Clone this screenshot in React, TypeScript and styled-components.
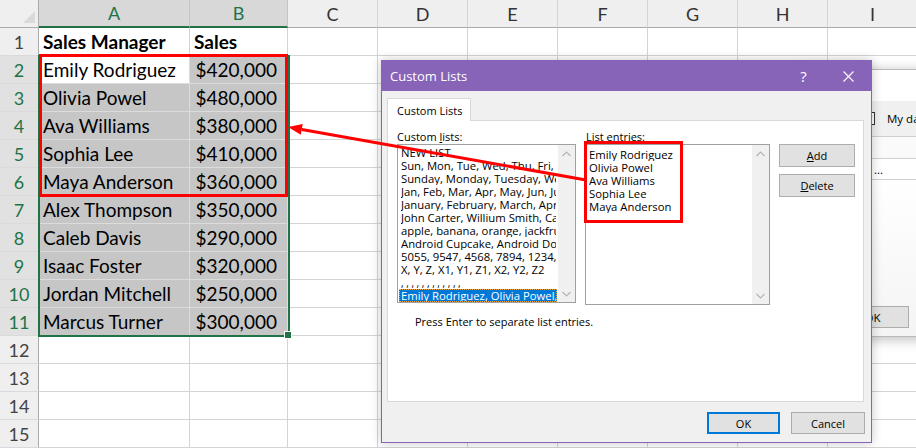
import React from "react";
import styled, { createGlobalStyle } from "styled-components";

const GlobalStyle = createGlobalStyle`
  html, body { margin: 0; padding: 0; background: #fff; overflow: hidden; }
  * { box-sizing: border-box; }
`;

const Page = styled.div`
  position: relative;
  width: 916px;
  height: 448px;
  overflow: hidden;
  background: #fff;
`;

/* ---------- Spreadsheet ---------- */

const Sheet = styled.div`
  display: grid;
  grid-template-columns: 39px 151px 98px repeat(8, 90px);
  grid-auto-rows: 28px;
  font-family: Lato, "Liberation Sans", sans-serif;
  font-size: 18px;
  color: #000;
`;

const Corner = styled.div`
  position: relative;
  background: #efefef;
  border-right: 1px solid #ababab;
  border-bottom: 1px solid #ababab;
  &::after {
    content: "";
    position: absolute;
    right: 3px;
    bottom: 4px;
    width: 0;
    height: 0;
    border-left: 12px solid transparent;
    border-bottom: 12px solid #dadada;
  }
`;

const ColHead = styled.div<{ $sel?: boolean }>`
  display: flex;
  align-items: center;
  justify-content: center;
  background: ${(p) => (p.$sel ? "#d8d8d8" : "#efefef")};
  color: ${(p) => (p.$sel ? "#217346" : "#333")};
  border-right: 1px solid ${(p) => (p.$sel ? "#c4c4c4" : "#d4d4d4")};
  border-bottom: ${(p) => (p.$sel ? "2px solid #217346" : "1px solid #ababab")};
`;

const RowHead = styled.div<{ $sel?: boolean }>`
  display: flex;
  align-items: center;
  justify-content: center;
  background: ${(p) => (p.$sel ? "#e1e1e1" : "#efefef")};
  color: ${(p) => (p.$sel ? "#217346" : "#444")};
  border-right: 1px solid #ababab;
  border-bottom: 1px solid #dadada;
`;

const Cell = styled.div<{ $sel?: boolean; $active?: boolean; $bold?: boolean; $num?: boolean }>`
  display: flex;
  align-items: center;
  justify-content: ${(p) => (p.$num ? "flex-end" : "flex-start")};
  padding: ${(p) => (p.$num ? "0 10px 0 0" : "0 0 0 4px")};
  background: ${(p) => (p.$sel && !p.$active ? "#c6c6c6" : "#fff")};
  border-right: 1px solid ${(p) => (p.$sel ? "#dcdcdc" : "#d4d4d4")};
  border-bottom: 1px solid ${(p) => (p.$sel ? "#dcdcdc" : "#d4d4d4")};
  font-size: 19px;
  font-weight: ${(p) => (p.$bold ? 700 : 400)};
  white-space: nowrap;
  overflow: hidden;
`;

const SelectionFrame = styled.div`
  position: absolute;
  left: 38px;
  top: 55px;
  width: 252px;
  height: 282px;
  border: 2px solid #217346;
  pointer-events: none;
`;

const FillHandle = styled.div`
  position: absolute;
  left: 285px;
  top: 332px;
  width: 6px;
  height: 6px;
  background: #217346;
  outline: 1px solid #fff;
`;

const RedBox = styled.div<{ $l: number; $t: number; $w: number; $h: number }>`
  position: absolute;
  left: ${(p) => p.$l}px;
  top: ${(p) => p.$t}px;
  width: ${(p) => p.$w}px;
  height: ${(p) => p.$h}px;
  border: 3px solid #ff0000;
  pointer-events: none;
  z-index: 5;
`;

/* ---------- Background (Sort) dialog ---------- */

const BackWindow = styled.div`
  position: absolute;
  left: 800px;
  top: 69px;
  width: 200px;
  height: 268px;
  background: #f0f0f0;
  border: 1px solid #b9b9b9;
  box-shadow: 0 2px 12px rgba(0, 0, 0, 0.28);
  display: flex;
  flex-direction: column;
  font-family: "Open Sans", "Liberation Sans", sans-serif;
  font-size: 11.5px;
  color: #000;
`;

const BackTitle = styled.div`
  height: 31px;
  background: #fff;
  flex: none;
`;

const BackToolbar = styled.div`
  height: 36px;
  display: flex;
  align-items: center;
  padding-left: 61px;
  gap: 12px;
  border-bottom: 1px solid #cfcfcf;
  flex: none;
`;

const CheckBox = styled.div`
  width: 13px;
  height: 13px;
  border: 1px solid #333;
  background: #fff;
  display: flex;
  align-items: center;
  justify-content: center;
`;

const BackHeaderRow = styled.div`
  height: 22px;
  background: #fafafa;
  border-bottom: 1px solid #cfcfcf;
  flex: none;
`;

const BackFieldRow = styled.div`
  height: 21px;
  display: flex;
  align-items: center;
  padding-left: 73px;
  background: #fff;
  border-bottom: 1px solid #cfcfcf;
  flex: none;
`;

const BackBody = styled.div`
  flex: 1;
  display: flex;
  align-items: flex-end;
  padding: 0 0 8px 35px;
  background: linear-gradient(#fff, #f4f4f4);
`;

const BackButton = styled.div`
  width: 73px;
  height: 22px;
  background: #e1e1e1;
  border: 1px solid #adadad;
  display: flex;
  align-items: center;
  justify-content: center;
`;

/* ---------- Custom Lists dialog ---------- */

const Dialog = styled.div`
  position: absolute;
  left: 381px;
  top: 60px;
  width: 491px;
  height: 383px;
  border: 1px solid #8764b8;
  background: #f0f0f0;
  box-shadow: 0 0 10px rgba(0, 0, 0, 0.22);
  display: flex;
  flex-direction: column;
  font-family: "Open Sans", "Liberation Sans", sans-serif;
  font-size: 11px;
  color: #000;
  z-index: 3;
`;

const TitleBar = styled.div`
  height: 30px;
  flex: none;
  background: #8764b8;
  color: #fff;
  display: flex;
  align-items: center;
  padding-left: 8px;
  font-size: 13px;
`;

const TitleText = styled.div`
  flex: 1;
`;

const TitleButton = styled.div`
  width: 45px;
  height: 30px;
  display: flex;
  align-items: center;
  justify-content: center;
  font-size: 15px;
`;

const Body = styled.div`
  flex: 1;
  display: flex;
  flex-direction: column;
  padding: 7px 6px 8px 5px;
`;

const TabStrip = styled.div`
  display: flex;
  height: 22px;
  flex: none;
`;

const Tab = styled.div`
  width: 84px;
  height: 23px;
  background: #fff;
  border: 1px solid #d9d9d9;
  border-bottom: none;
  display: flex;
  align-items: center;
  padding-left: 9px;
  position: relative;
  z-index: 1;
`;

const Panel = styled.div`
  height: 282px;
  flex: none;
  margin-right: 1px;
  background: #fff;
  border: 1px solid #d9d9d9;
  padding: 8px 0 0 9px;
  display: flex;
  flex-direction: column;
`;

const PanelGrid = styled.div`
  display: grid;
  grid-template-columns: 179px 185px 76px;
  grid-template-rows: 15px auto;
  column-gap: 9px;
`;

const Label = styled.div<{ $pad?: number }>`
  padding-left: ${(p) => p.$pad ?? 0}px;
  line-height: 15px;
`;

const U = styled.span`
  text-decoration: underline;
  text-underline-offset: 1px;
`;

const ListBox = styled.div<{ $h: number }>`
  height: ${(p) => p.$h}px;
  border: 1px solid #a0a0a0;
  background: #fff;
  display: flex;
  overflow: hidden;
`;

const ListItems = styled.div<{ $padTop: number; $padLeft: number; $padRight?: number }>`
  flex: 1;
  min-width: 0;
  overflow: hidden;
  padding-top: ${(p) => p.$padTop}px;
  padding-left: ${(p) => p.$padLeft}px;
  padding-right: ${(p) => p.$padRight ?? 0}px;
  font-size: 11.3px;
`;

const Item = styled.div<{ $selected?: boolean }>`
  height: 13px;
  white-space: nowrap;
  overflow: hidden;
  margin-left: ${(p) => (p.$selected ? "-2px" : "0")};
  margin-right: ${(p) => (p.$selected ? "-1px" : "0")};
  padding-left: ${(p) => (p.$selected ? "1px" : "0")};
  background: ${(p) => (p.$selected ? "#0078d7" : "transparent")};
  color: ${(p) => (p.$selected ? "#fff" : "#000")};
  border: ${(p) => (p.$selected ? "1px dotted #e9a640" : "none")};
  line-height: ${(p) => (p.$selected ? "11px" : "13px")};
`;

const CommaRow = styled.div`
  height: 13px;
  line-height: 6px;
  white-space: nowrap;
  overflow: hidden;
  letter-spacing: 2.6px;
  font-size: 10px;
  padding-top: 4px;
`;

const ScrollBar = styled.div`
  width: 17px;
  flex: none;
  background: #f0f0f0;
  display: flex;
  flex-direction: column;
  justify-content: space-between;
`;

const ScrollArrow = styled.div`
  height: 17px;
  display: flex;
  align-items: center;
  justify-content: center;
`;

const ButtonColumn = styled.div`
  display: flex;
  flex-direction: column;
  gap: 7px;
`;

const Button = styled.div<{ $w?: number; $h?: number; $default?: boolean }>`
  width: ${(p) => p.$w ?? 76}px;
  height: ${(p) => p.$h ?? 23}px;
  background: #e1e1e1;
  border: ${(p) => (p.$default ? "2px solid #0078d7" : "1px solid #adadad")};
  display: flex;
  align-items: center;
  justify-content: center;
`;

const Hint = styled.div`
  margin-top: 9px;
  padding-left: 18px;
  line-height: 15px;
`;

const Footer = styled.div`
  display: flex;
  justify-content: flex-end;
  gap: 11px;
  margin-top: 10px;
`;

const ArrowLayer = styled.svg`
  position: absolute;
  left: 0;
  top: 0;
  width: 916px;
  height: 448px;
  pointer-events: none;
  z-index: 6;
`;

/* ---------- Data ---------- */

const colLetters = ["A", "B", "C", "D", "E", "F", "G", "H", "I", "J"];

const data: [string, string][] = [
  ["Sales Manager", "Sales"],
  ["Emily Rodriguez", "$420,000"],
  ["Olivia Powel", "$480,000"],
  ["Ava Williams", "$380,000"],
  ["Sophia Lee", "$410,000"],
  ["Maya Anderson", "$360,000"],
  ["Alex Thompson", "$350,000"],
  ["Caleb Davis", "$290,000"],
  ["Isaac Foster", "$320,000"],
  ["Jordan Mitchell", "$250,000"],
  ["Marcus Turner", "$300,000"],
];

const customLists = [
  "NEW LIST",
  "Sun, Mon, Tue, Wed, Thu, Fri, Sat",
  "Sunday, Monday, Tuesday, Wednesday, Thursday",
  "Jan, Feb, Mar, Apr, May, Jun, Jul, Aug",
  "January, February, March, April, May",
  "John Carter, Willium Smith, Carl",
  "apple, banana, orange, jackfruit",
  "Android Cupcake, Android Donut",
  "5055, 9547, 4568, 7894, 1234, 1",
  "X, Y, Z, X1, Y1, Z1, X2, Y2, Z2",
];

const entries = ["Emily Rodriguez", "Olivia Powel", "Ava Williams", "Sophia Lee", "Maya Anderson"];

const Chevron = ({ up }: { up?: boolean }) => (
  <svg width="9" height="6" viewBox="0 0 9 6">
    <polyline
      points={up ? "0.5,5 4.5,1 8.5,5" : "0.5,1 4.5,5 8.5,1"}
      fill="none"
      stroke="#b4b4b4"
      strokeWidth="1.2"
    />
  </svg>
);

const Scroll = () => (
  <ScrollBar>
    <ScrollArrow>
      <Chevron up />
    </ScrollArrow>
    <ScrollArrow>
      <Chevron />
    </ScrollArrow>
  </ScrollBar>
);

function SheetGrid() {
  const cells: React.ReactNode[] = [];
  cells.push(<Corner key="corner" />);
  colLetters.forEach((c, i) => {
    cells.push(
      <ColHead key={"h" + c} $sel={i < 2}>
        {c}
      </ColHead>
    );
  });
  for (let r = 1; r <= 15; r++) {
    const sel = r >= 2 && r <= 11;
    cells.push(
      <RowHead key={"r" + r} $sel={sel}>
        {r}
      </RowHead>
    );
    const row = data[r - 1];
    for (let c = 0; c < colLetters.length; c++) {
      const inSel = sel && c < 2;
      const text = row && c < 2 ? row[c] : "";
      cells.push(
        <Cell
          key={`c${r}-${c}`}
          $sel={inSel}
          $active={r === 2 && c === 0}
          $bold={r === 1}
          $num={c === 1 && r > 1}
        >
          {text}
        </Cell>
      );
    }
  }
  return <Sheet>{cells}</Sheet>;
}

export default function App() {
  const tip = { x: 288, y: 127 };
  const tail = { x: 586, y: 180 };
  const dx = tail.x - tip.x;
  const dy = tail.y - tip.y;
  const len = Math.hypot(dx, dy);
  const ux = dx / len;
  const uy = dy / len;
  const nx = -uy;
  const ny = ux;
  const bx = tip.x + ux * 14;
  const by = tip.y + uy * 14;
  const head = `${tip.x},${tip.y} ${bx + nx * 5.5},${by + ny * 5.5} ${bx - nx * 5.5},${by - ny * 5.5}`;

  return (
    <Page>
      <GlobalStyle />
      <SheetGrid />
      <SelectionFrame />
      <FillHandle />
      <RedBox $l={39} $t={54} $w={249} $h={143} />

      <BackWindow>
        <BackTitle />
        <BackToolbar>
          <CheckBox>
            <svg width="9" height="9" viewBox="0 0 9 9">
              <polyline points="1,4.5 3.5,7 8,1.5" fill="none" stroke="#222" strokeWidth="1.2" />
            </svg>
          </CheckBox>
          <span>My data has headers</span>
        </BackToolbar>
        <BackHeaderRow />
        <BackFieldRow>...</BackFieldRow>
        <BackBody>
          <BackButton>OK</BackButton>
        </BackBody>
      </BackWindow>

      <Dialog>
        <TitleBar>
          <TitleText>Custom Lists</TitleText>
          <TitleButton>?</TitleButton>
          <TitleButton>
            <svg width="11" height="11" viewBox="0 0 11 11">
              <path d="M0.5,0.5 L10.5,10.5 M10.5,0.5 L0.5,10.5" stroke="#fff" strokeWidth="1.1" />
            </svg>
          </TitleButton>
        </TitleBar>
        <Body>
          <TabStrip>
            <Tab>Custom Lists</Tab>
          </TabStrip>
          <Panel>
            <PanelGrid>
              <Label>
                Custom <U>l</U>ists:
              </Label>
              <Label $pad={1}>
                Lis<U>t</U> entries:
              </Label>
              <div />
              <ListBox $h={159}>
                <ListItems $padTop={1} $padLeft={3} $padRight={2}>
                  {customLists.map((t) => (
                    <Item key={t}>{t}</Item>
                  ))}
                  <CommaRow>,,,,,,,,,,,,</CommaRow>
                  <Item $selected>Emily Rodriguez, Olivia Powel, Ava</Item>
                </ListItems>
                <Scroll />
              </ListBox>
              <ListBox $h={161}>
                <ListItems $padTop={3} $padLeft={3}>
                  {entries.map((t) => (
                    <Item key={t}>{t}</Item>
                  ))}
                </ListItems>
                <Scroll />
              </ListBox>
              <ButtonColumn>
                <Button>
                  <span>
                    <U>A</U>dd
                  </span>
                </Button>
                <Button>
                  <span>
                    <U>D</U>elete
                  </span>
                </Button>
              </ButtonColumn>
            </PanelGrid>
            <Hint>Press Enter to separate list entries.</Hint>
          </Panel>
          <Footer>
            <Button $w={73} $h={22} $default>
              OK
            </Button>
            <Button $w={74} $h={22}>
              Cancel
            </Button>
          </Footer>
        </Body>
      </Dialog>

      <RedBox $l={584} $t={141} $w={99} $h={82} />

      <ArrowLayer viewBox="0 0 916 448">
        <line x1={tail.x} y1={tail.y} x2={bx} y2={by} stroke="#ff0000" strokeWidth="3" />
        <polygon points={head} fill="#ff0000" />
      </ArrowLayer>
    </Page>
  );
}
